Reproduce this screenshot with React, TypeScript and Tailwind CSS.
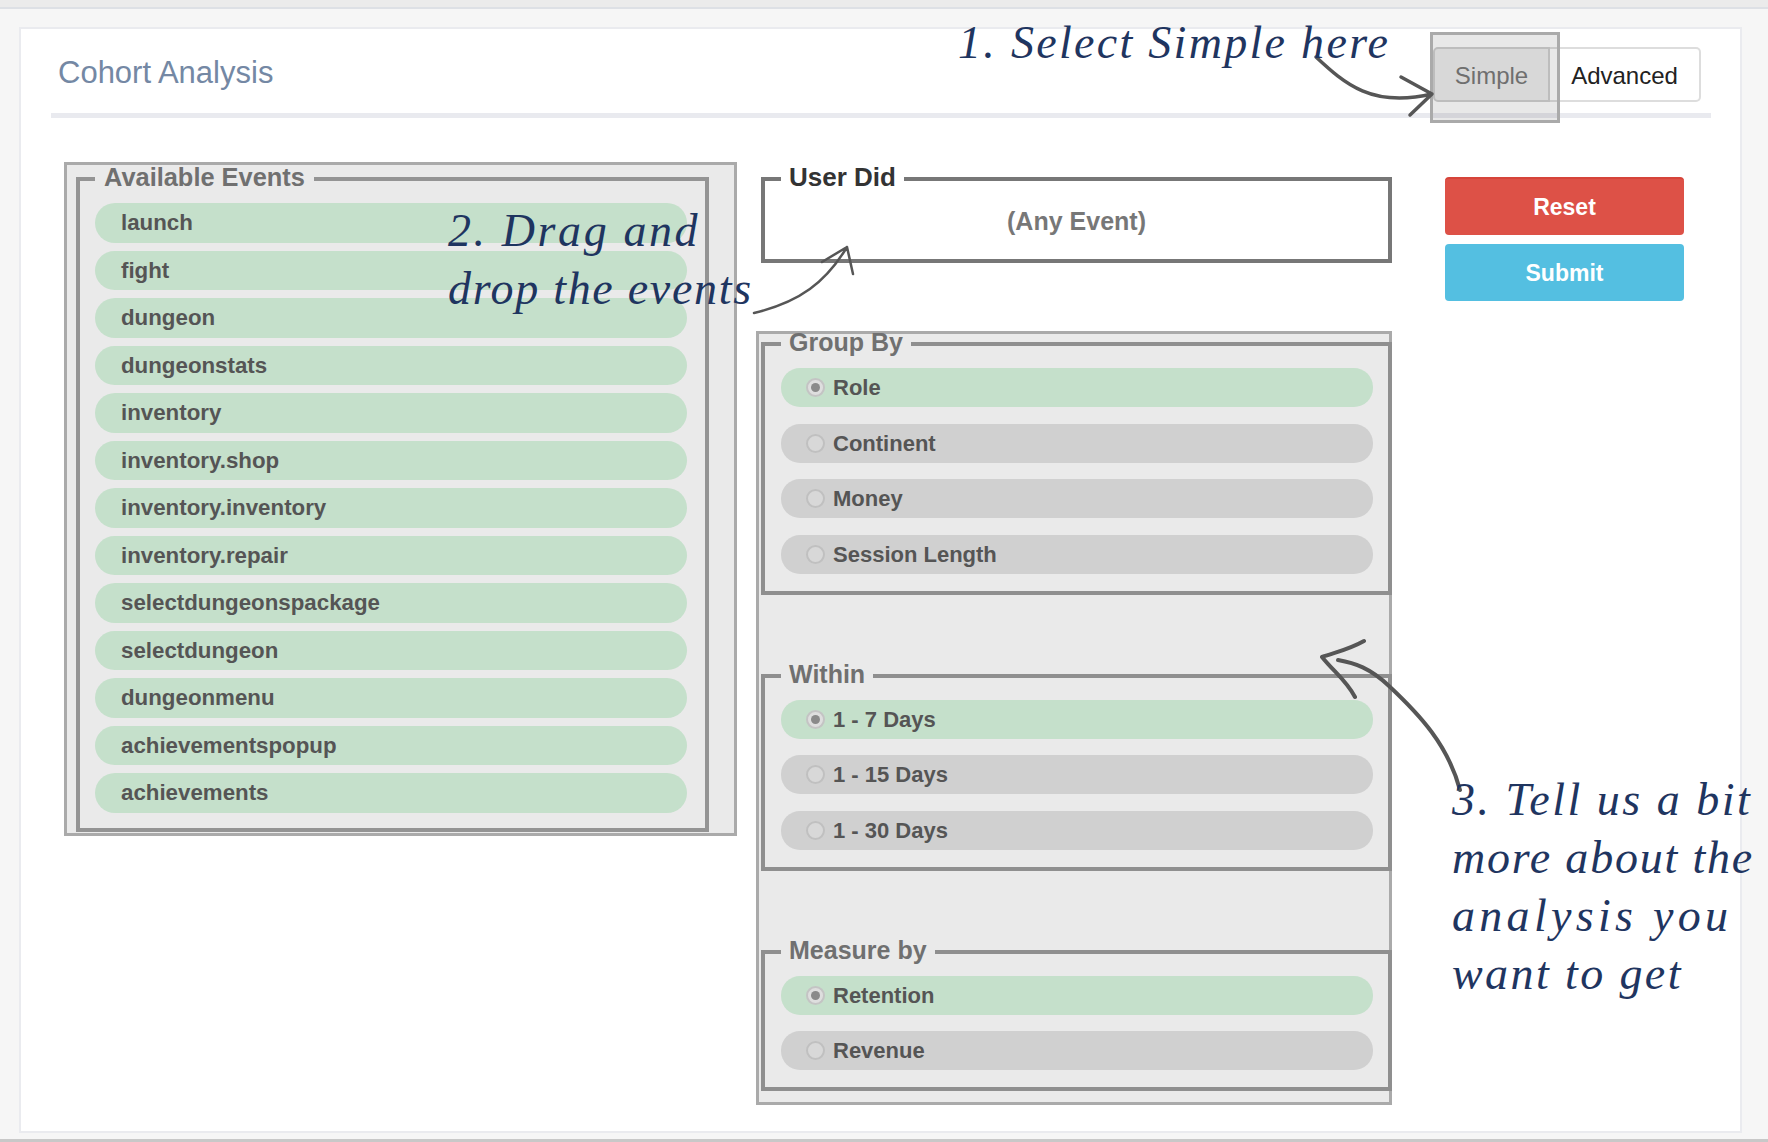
import React from "react";

const events = ["launch","fight","dungeon","dungeonstats","inventory","inventory.shop","inventory.inventory","inventory.repair","selectdungeonspackage","selectdungeon","dungeonmenu","achievementspopup","achievements"];

function Radio({ label, on }: { label: string; on?: boolean }) {
  return (
    <div className={`flex h-[39px] items-center rounded-[19px] pl-[25px] ${on ? "bg-[#c5e0cb]" : "bg-[#d0d0d0]"}`}>
      <span className={`flex h-[19px] w-[19px] shrink-0 items-center justify-center rounded-full border-2 ${on ? "border-[#c4c4c4] bg-[#dedede]" : "border-[#c0c0c0] bg-[#d8d8d8]"}`}>
        {on && <span className="h-[9px] w-[9px] rounded-full bg-[#8a8a8a]" />}
      </span>
      <span className="ml-[8px] text-[22px] font-bold text-[#555]">{label}</span>
    </div>
  );
}

function Group({ title, items, className }: { title: string; items: string[]; className: string }) {
  return (
    <fieldset className={`ml-[2px] -mr-[3px] border-4 border-[#8f8f8f] pl-[16px] pr-[14px] ${className}`}>
      <legend className="ml-[0px] px-[8px] pb-[4px] text-[25px] leading-[24px] font-bold text-[#707070]">{title}</legend>
      <div className="flex flex-col gap-[16.5px] pt-[10px] pr-[1px]">
        {items.map((t, i) => <Radio key={t} label={t} on={i === 0} />)}
      </div>
    </fieldset>
  );
}

const note = "absolute whitespace-nowrap text-[46px] leading-[58px] italic text-[#1f3560] [font-family:'Liberation_Serif',serif]";

export default function App() {
  return (
    <div className="relative flex h-[1142px] w-[1768px] flex-col overflow-hidden bg-[#f6f6f6] [font-family:'Liberation_Sans',Arial,sans-serif]">
      <div className="h-[9px] shrink-0 border-b-2 border-[#dde0e5] bg-[#ebebeb]" />
      <div className="flex-1 px-[19px] pt-[18px] pr-[26px]">
        <div className="h-[1106px] border-2 border-[#eaebef] bg-white">
          <header className="ml-[30px] mr-[29px] flex h-[89px] items-start justify-between border-b-[5px] border-[#e9eaef] pl-[7px] pr-[10px]">
            <h1 className="mt-[25px] text-[31px] leading-[38px] font-normal text-[#7488a4]">Cohort Analysis</h1>
            <div className="mt-[18px] flex h-[55px] text-[24px]">
              <button className="relative w-[117px] rounded-l-[5px] border-2 border-[#d0d0d0] bg-[#eeeeee] pt-[3px] text-[#7a7a7a]">
                Simple
                <span className="absolute -top-[17px] -left-[5px] h-[91px] w-[130px] border-[3px] border-[#aaaaaa] bg-black/[0.09]" />
              </button>
              <button className="w-[151px] rounded-r-[5px] border-2 border-l-0 border-[#dddddd] bg-white pt-[3px] text-[#222]">Advanced</button>
            </div>
          </header>
          <div className="flex items-start pl-[43px] pt-[44px]">
            <section className="w-[673px] border-[3px] border-[#aaaaaa] bg-[#eaeaea] pb-[1px]">
              <fieldset className="ml-[9px] mr-[25px] border-4 border-[#949494] px-[15px] pb-[15px]">
                <legend className="ml-[0px] px-[9px] pb-[4px] text-[25.4px] leading-[24px] font-bold text-[#707070]">Available Events</legend>
                <div className="flex flex-col gap-[8px] pt-[10px] pr-[3px]">
                  {events.map(e => (
                    <div key={e} className="flex h-[39.5px] items-center rounded-[20px] bg-[#c5e0cb] pl-[26px] text-[22.3px] font-bold text-[#555]">{e}</div>
                  ))}
                </div>
              </fieldset>
            </section>
            <div className="ml-[19px] w-[636px]">
              <fieldset className="ml-[5px] mt-[3px] h-[98px] border-4 border-[#777777]">
                <legend className="ml-[16px] px-[8px] pb-[4px] text-[26px] leading-[24px] font-bold text-[#333]">User Did</legend>
                <div className="pt-[10px] text-center text-[25px] font-bold text-[#777]">(Any Event)</div>
              </fieldset>
              <section className="mt-[68px] h-[774px] border-[3px] border-[#aaaaaa] bg-[#eaeaea]">
                <Group title="Group By" items={["Role","Continent","Money","Session Length"]} className="-mt-[4px] pb-[17px]" />
                <Group title="Within" items={["1 - 7 Days","1 - 15 Days","1 - 30 Days"]} className="mt-[67px] pb-[17px]" />
                <Group title="Measure by" items={["Retention","Revenue"]} className="mt-[67px] pb-[17px]" />
              </section>
            </div>
            <div className="ml-[53px] flex w-[239px] flex-col gap-[9px] pt-[15px] text-[23px] font-bold text-white">
              <button className="h-[58px] rounded-[4px] border-t-2 border-[#d6443a] bg-[#dd5147] pt-[1px]">Reset</button>
              <button className="h-[57px] rounded-[4px] bg-[#54bfe1] pt-[2px]">Submit</button>
            </div>
          </div>
        </div>
      </div>
      <div className="h-[3px] shrink-0 bg-[#c8c8c8]" />

      <svg className="pointer-events-none absolute inset-0" width="1768" height="1142" fill="none" stroke="#565656" strokeWidth="3.5" strokeLinecap="round" strokeLinejoin="round">
        <path d="M1316 57C1345 84 1372 108 1432 94M1401 77L1432 94L1410 115" />
        <path d="M754 313C800 302 826 282 847 247M822 262L847 247L853 274" strokeWidth="2.5" />
        <path d="M1460 790C1448 745 1420 715 1389 686C1370 668 1355 663 1338 660M1364 641C1348 650 1336 652 1322 657C1334 672 1346 680 1355 697" strokeWidth="4" />
      </svg>
      <span className={`${note} left-[958px] top-[14px] tracking-[2.3px]`}>1. Select Simple here</span>
      <span className={`${note} left-[448px] top-[202px] tracking-[2.6px]`}>2. Drag and</span>
      <span className={`${note} left-[448px] top-[260px] tracking-[1.7px]`}>drop the events</span>
      <span className={`${note} left-[1452px] top-[771px] tracking-[2.5px]`}>3. Tell us a bit</span>
      <span className={`${note} left-[1452px] top-[829px] tracking-[1.8px]`}>more about the</span>
      <span className={`${note} left-[1452px] top-[887px] tracking-[4.3px]`}>analysis you</span>
      <span className={`${note} left-[1452px] top-[945px] tracking-[2.4px]`}>want to get</span>
    </div>
  );
}
